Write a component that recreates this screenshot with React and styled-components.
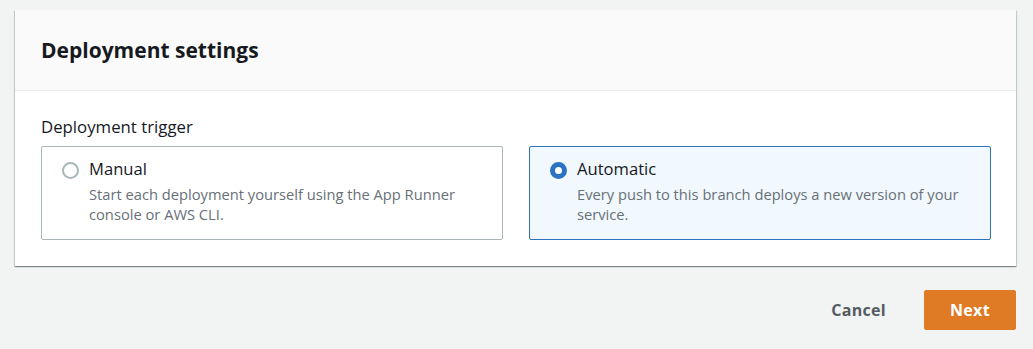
import React, { useState } from "react";
import styled, { createGlobalStyle, css } from "styled-components";

const Global = createGlobalStyle`
  html, body { margin: 0; padding: 0; background: #f2f3f3; }
  body { font-family: "Open Sans", "Noto Sans", Arial, sans-serif; color: #16191f; -webkit-font-smoothing: antialiased; }
  * { box-sizing: border-box; }
`;

const Page = styled.div`
  padding: 10px 17px 20px 15px;
  display: flex;
  flex-direction: column;
  gap: 24px;
`;

const Card = styled.section`
  background: #fff;
  box-shadow: 0 1px 1px 0 rgba(0, 28, 36, 0.3), 1px 1px 1px 0 rgba(0, 28, 36, 0.15),
    -1px 1px 1px 0 rgba(0, 28, 36, 0.15);
`;

const CardHeader = styled.header`
  background: #fafafa;
  border-bottom: 1px solid #eaeded;
  padding: 27px 26px 27px;
`;

const Title = styled.h2`
  margin: 0;
  font-size: 21px;
  line-height: 26px;
  font-weight: 700;
  color: #16191f;
`;

const CardBody = styled.div`
  padding: 25px 25px 26px 26px;
`;

const Label = styled.div`
  font-size: 16.8px;
  line-height: 22px;
  color: #16191f;
  margin-bottom: 8px;
`;

const Tiles = styled.div`
  display: grid;
  grid-template-columns: 1fr 1fr;
  gap: 26px;
`;

const Tile = styled.label`
  display: flex;
  align-items: flex-start;
  gap: 10px;
  padding: 11px 20px 15px 20px;
  border: 1px solid ${(p) => (p.$selected ? "#2b74bd" : "#aab7b8")};
  background: ${(p) => (p.$selected ? "#f1f8fe" : "#fff")};
  border-radius: 2px;
  cursor: pointer;
`;

const Radio = styled.span`
  flex: none;
  width: 17px;
  height: 17px;
  margin-top: 4px;
  border-radius: 50%;
  background: #fff;
  ${(p) =>
    p.$checked
      ? css`
          border: 5.5px solid #2b72c2;
        `
      : css`
          border: 2px solid #aab7b8;
        `}
`;

const TileText = styled.div`
  display: flex;
  flex-direction: column;
  gap: 4px;
`;

const TileTitle = styled.span`
  font-size: 16.6px;
  line-height: 22px;
  color: #16191f;
`;

const TileDesc = styled.span`
  font-size: 14.7px;
  line-height: 20px;
  color: #687078;
`;

const Actions = styled.div`
  display: flex;
  justify-content: flex-end;
  align-items: center;
  gap: 17px;
`;

const Button = styled.button`
  height: 40px;
  padding: 0 20px;
  border-radius: 2px;
  font-family: inherit;
  font-size: 16px;
  font-weight: 700;
  letter-spacing: 0.3px;
  cursor: pointer;
  ${(p) =>
    p.$primary
      ? css`
          background: #df7b24;
          color: #fff;
          border: 1px solid #df7b24;
          min-width: 92px;
        `
      : css`
          background: transparent;
          color: #545b64;
          border: 1px solid transparent;
        `}
`;

const options = [
  {
    id: "manual",
    title: "Manual",
    desc: "Start each deployment yourself using the App Runner console or AWS CLI.",
  },
  {
    id: "automatic",
    title: "Automatic",
    desc: "Every push to this branch deploys a new version of your service.",
  },
];

export default function App() {
  const [value, setValue] = useState("automatic");
  return (
    <>
      <Global />
      <Page>
        <Card>
          <CardHeader>
            <Title>Deployment settings</Title>
          </CardHeader>
          <CardBody>
            <Label>Deployment trigger</Label>
            <Tiles>
              {options.map((o) => (
                <Tile key={o.id} $selected={value === o.id} onClick={() => setValue(o.id)}>
                  <Radio $checked={value === o.id} />
                  <TileText>
                    <TileTitle>{o.title}</TileTitle>
                    <TileDesc>{o.desc}</TileDesc>
                  </TileText>
                </Tile>
              ))}
            </Tiles>
          </CardBody>
        </Card>
        <Actions>
          <Button>Cancel</Button>
          <Button $primary>Next</Button>
        </Actions>
      </Page>
    </>
  );
}
